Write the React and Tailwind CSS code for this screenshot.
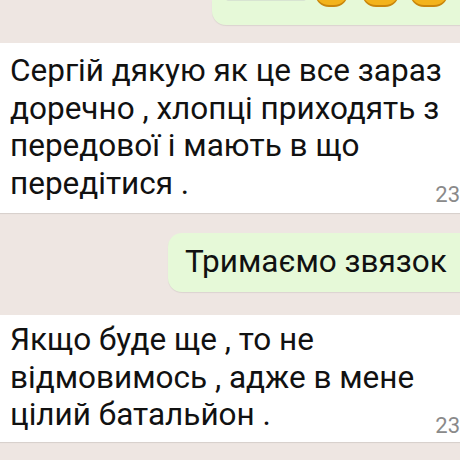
export default function App() {
  const font = { fontFamily: 'Roboto, "Noto Sans", sans-serif' };
  return (
    <div className="w-[460px] h-[460px] overflow-hidden bg-[#eee6e2] flex flex-col" style={font}>
      <div className="ml-[212px] w-[290px] h-[25px] shrink-0 bg-[#e6f9d8] rounded-bl-[14px] shadow-[0_1px_1px_rgba(0,0,0,0.08)] overflow-hidden">
        <svg width="290" height="25" viewBox="0 0 290 25">
          <rect x="14" y="-4" width="80" height="5" rx="2.5" fill="#d8e4d2" />
          <rect x="103" y="-30" width="33" height="37" rx="14" fill="#c9860c" />
          <rect x="103" y="-30" width="33" height="35" rx="14" fill="#f3b31c" />
          <rect x="150" y="-30" width="37" height="37" rx="14" fill="#c9860c" />
          <rect x="150" y="-30" width="37" height="35" rx="14" fill="#f3b31c" />
          <rect x="198" y="-30" width="38" height="37" rx="14" fill="#c9860c" />
          <rect x="198" y="-30" width="38" height="35" rx="14" fill="#f3b31c" />
        </svg>
      </div>

      <div className="mt-[18px] ml-[-20px] w-[520px] h-[170px] shrink-0 bg-white rounded-[14px] shadow-[0_1px_1px_rgba(0,0,0,0.1)] pl-[30px] pr-[40px] pt-[9px] text-[31.5px] leading-[37.5px] text-[#111]">
        <div>Сергій дякую як це все зараз</div>
        <div>доречно , хлопці приходять з</div>
        <div>передової і мають в що</div>
        <div className="flex items-end justify-between">
          <span>передітися .</span>
          <span className="mb-[-4px] text-[22px] leading-none text-[#8a8a8a]">23</span>
        </div>
      </div>

      <div className="mt-[20px] ml-[168px] w-[320px] h-[59px] shrink-0 bg-[#e6f9d8] rounded-[14px] shadow-[0_1px_1px_rgba(0,0,0,0.08)] pl-[17px] pt-[10px]">
        <p className="text-[31.5px] leading-[37.5px] text-[#111] whitespace-nowrap">Тримаємо звязок</p>
      </div>

      <div className="mt-[23px] ml-[-20px] w-[520px] h-[127px] shrink-0 bg-white rounded-[14px] shadow-[0_1px_1px_rgba(0,0,0,0.1)] pl-[30px] pr-[40px] pt-[6px] text-[31.5px] leading-[37.5px] text-[#111]">
        <div>Якщо буде ще , то не</div>
        <div>відмовимось , адже в мене</div>
        <div className="flex items-end justify-between">
          <span>цілий батальйон .</span>
          <span className="mb-[-3px] text-[22px] leading-none text-[#8a8a8a]">23</span>
        </div>
      </div>
    </div>
  );
}
